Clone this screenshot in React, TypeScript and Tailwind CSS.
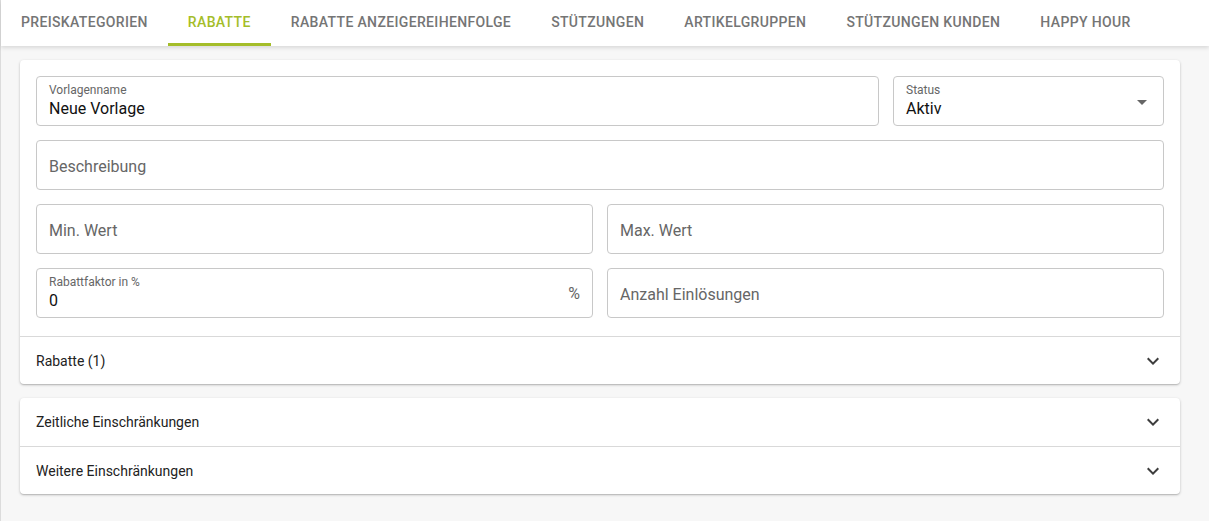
import { ReactNode } from 'react';

const TABS = [
  'Preiskategorien',
  'Rabatte',
  'Rabatte Anzeigereihenfolge',
  'Stützungen',
  'Artikelgruppen',
  'Stützungen Kunden',
  'Happy Hour',
];

function ExpandMore() {
  return (
    <svg viewBox="0 0 24 24" className="h-6 w-6 fill-[#3d3d3d]">
      <path d="M16.59 8.59 12 13.17 7.41 8.59 6 10l6 6 6-6z" />
    </svg>
  );
}

function Field({
  label,
  value,
  placeholder,
  adornment,
}: {
  label?: string;
  value?: string;
  placeholder?: string;
  adornment?: ReactNode;
}) {
  return (
    <div className="relative flex h-[50px] items-center rounded border border-[#c8c8c8] bg-white px-3">
      {label ? (
        <div className="flex flex-col pt-[2px]">
          <span className="text-[12px] leading-[14px] text-[#666]">{label}</span>
          <span className="text-[16px] leading-[24px] text-[#111]">{value}</span>
        </div>
      ) : (
        <span className="pt-[3px] text-[16px] text-[#666]">{placeholder}</span>
      )}
      {adornment && <div className="ml-auto pt-[2px]">{adornment}</div>}
    </div>
  );
}

function AccordionRow({ title, divider }: { title: string; divider?: boolean }) {
  return (
    <div
      className={`flex h-12 items-center justify-between pl-4 pr-[15px] ${divider ? 'border-t border-[#d9d9d9]' : ''}`}
    >
      <span className="pt-[1px] text-[14px] text-[#222]">{title}</span>
      <ExpandMore />
    </div>
  );
}

export default function App() {
  return (
    <div
      className="min-h-[521px] border-l border-[#dcdcdc] bg-[#f7f7f7]"
      style={{ fontFamily: 'Roboto, "Liberation Sans", sans-serif' }}
    >
      <div className="flex h-[46px] bg-white shadow-[0_2px_4px_rgba(0,0,0,0.12)]">
        {TABS.map((tab, i) => (
          <div
            key={tab}
            className={`flex items-center border-b-[3px] px-5 pt-[2px] text-[14px] font-medium uppercase tracking-[0.025em] ${
              i === 1 ? 'border-[#a4bd29] text-[#a4bd29]' : 'border-transparent text-[#757575]'
            }`}
          >
            {tab}
          </div>
        ))}
      </div>

      <div className="flex flex-col gap-[14px] pl-[19px] pr-[29px] pt-[14px]">
        <div className="rounded bg-white shadow-[0_1px_3px_rgba(0,0,0,0.2),0_1px_1px_rgba(0,0,0,0.12)]">
          <div className="flex flex-col gap-[14px] px-4 pb-4 pt-4">
            <div className="grid grid-cols-[1fr_271px] gap-[14px]">
              <Field label="Vorlagenname" value="Neue Vorlage" />
              <Field
                label="Status"
                value="Aktiv"
                adornment={
                  <svg viewBox="0 0 24 24" className="mr-[-3px] h-6 w-6 fill-[#666]">
                    <path d="M7 10l5 5 5-5z" />
                  </svg>
                }
              />
            </div>
            <Field placeholder="Beschreibung" />
            <div className="grid grid-cols-2 gap-[14px]">
              <Field placeholder="Min. Wert" />
              <Field placeholder="Max. Wert" />
            </div>
            <div className="grid grid-cols-2 gap-[14px]">
              <Field
                label="Rabattfaktor in %"
                value="0"
                adornment={<span className="text-[16px] text-[#666]">%</span>}
              />
              <Field placeholder="Anzahl Einlösungen" />
            </div>
          </div>
          <div className="pt-[2px]">
            <AccordionRow title="Rabatte (1)" divider />
          </div>
        </div>

        <div className="rounded bg-white shadow-[0_1px_3px_rgba(0,0,0,0.2),0_1px_1px_rgba(0,0,0,0.12)]">
          <AccordionRow title="Zeitliche Einschränkungen" />
          <AccordionRow title="Weitere Einschränkungen" divider />
        </div>
      </div>
    </div>
  );
}
